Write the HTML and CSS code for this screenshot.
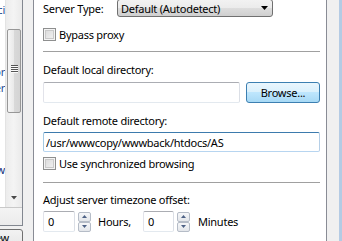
FILE: index.html
```html
<!doctype html>
<html>
  <head>
    <meta charset="UTF-8" />
    <title>Site Manager</title>
    <link rel="stylesheet" href="styles.css">
  </head>
  <body>
    <div class="window">
      <div class="sidebar">
        <div class="tree">
          <div class="tree-top">
            <ul class="tree-list">
              <li class="node node-1"><span>Lucci</span></li>
              <li class="node node-2"><span>Mirror</span></li>
              <li class="node node-3"><span>Server</span></li>
              <li class="node node-4"><span>Preview</span></li>
            </ul>
            <div class="vscroll">
              <div class="thumb"><span class="grip"></span></div>
              <div class="scroll-arrow">
                <svg width="6" height="4" viewBox="0 0 6 4"><polygon points="0,0 6,0 3,3.5" fill="#4a4a4a"/></svg>
              </div>
            </div>
          </div>
          <div class="hscroll"></div>
        </div>
        <button class="side-btn">New folder</button>
      </div>

      <div class="page">
        <div class="row row-type">
          <span class="field-label">Server Type:</span>
          <div class="combo">
            <span class="combo-text">Default (Autodetect)</span>
            <svg width="7" height="4" viewBox="0 0 7 4"><polygon points="0,0 7,0 3.5,4" fill="#000"/></svg>
          </div>
        </div>

        <label class="check check-bypass"><span class="box"></span>Bypass proxy</label>

        <hr class="sep sep-1">

        <div class="caption caption-local">Default local directory:</div>
        <div class="row row-local">
          <input class="textbox local" type="text" value="">
          <button class="btn">Browse...</button>
        </div>

        <div class="caption caption-remote">Default remote directory:</div>
        <input class="textbox remote" type="text" value="/usr/wwwcopy/wwwback/htdocs/AS">

        <label class="check check-sync"><span class="box"></span>Use synchronized browsing</label>

        <hr class="sep sep-2">

        <div class="caption caption-tz">Adjust server timezone offset:</div>
        <div class="row row-tz">
          <input class="textbox num" type="text" value="0">
          <div class="spin">
            <span class="spin-up"><svg width="5" height="3" viewBox="0 0 5 3"><polygon points="2.5,0 5,3 0,3" fill="#4d6185"/></svg></span>
            <span class="spin-down"><svg width="5" height="3" viewBox="0 0 5 3"><polygon points="0,0 5,0 2.5,3" fill="#4d6185"/></svg></span>
          </div>
          <span class="unit unit-hours">Hours,</span>
          <input class="textbox num num-min" type="text" value="0">
          <div class="spin">
            <span class="spin-up"><svg width="5" height="3" viewBox="0 0 5 3"><polygon points="2.5,0 5,3 0,3" fill="#4d6185"/></svg></span>
            <span class="spin-down"><svg width="5" height="3" viewBox="0 0 5 3"><polygon points="0,0 5,0 2.5,3" fill="#4d6185"/></svg></span>
          </div>
          <span class="unit unit-min">Minutes</span>
        </div>
      </div>

      <div class="edge"></div>
    </div>
  </body>
</html>
```

FILE: styles.css
```css
body {
  margin: 0;
  font-family: "Noto Sans", "Open Sans", sans-serif;
  font-size: 11px;
  letter-spacing: -0.25px;
  color: #000;
  background: #f0f0f0;
  overflow: hidden;
}
.window {
  display: flex;
  width: 342px;
  height: 241px;
  overflow: hidden;
}

/* left tree */
.sidebar {
  width: 23px;
  flex: none;
  display: flex;
  flex-direction: column;
}
.tree {
  height: 226px;
  box-sizing: border-box;
  background: #fff;
  border-right: 1px solid #828790;
  border-bottom: 1px solid #828790;
  display: flex;
  flex-direction: column;
}
.tree-top {
  display: flex;
  height: 207px;
}
.tree-list {
  width: 5px;
  margin: 0;
  padding: 0;
  list-style: none;
  overflow: hidden;
  color: #1f4c95;
}
.node {
  display: flex;
  justify-content: flex-end;
  white-space: nowrap;
  line-height: 16px;
  height: 16px;
}
.node-1 { margin-top: 2px; }
.node-2 { margin-top: 46px; }
.node-3 { margin-top: 0; }
.node-4 { margin-top: 66px; color: #12307a; }
.vscroll {
  width: 17px;
  display: flex;
  flex-direction: column;
  justify-content: space-between;
  background: linear-gradient(to right, #dadada 0, #ececec 1px, #f4f4f4 50%, #eaeaea 100%);
}
.thumb {
  margin: 29px 1px 0 2px;
  height: 84px;
  box-sizing: border-box;
  border: 1px solid #979797;
  border-radius: 2px;
  background: linear-gradient(to right, #f6f6f6, #e9e9e9 50%, #d9d9d9 50%, #d4d4d4);
  display: flex;
  justify-content: center;
}
.grip {
  margin-top: 35px;
  width: 7px;
  height: 8px;
  background: repeating-linear-gradient(to bottom, #555 0 1px, #fafafa 1px 2px);
}
.scroll-arrow {
  height: 17px;
  margin-bottom: 1px;
  display: flex;
  align-items: center;
  justify-content: center;
}
.hscroll {
  height: 17px;
  border-top: 1px solid #c9c9c9;
  background: linear-gradient(#f4f4f4, #ebebeb);
}
.side-btn {
  margin: 3px 0 0 -40px;
  width: 63px;
  height: 24px;
  flex: none;
  border: 1px solid #707070;
  border-radius: 3px;
  background: linear-gradient(#f2f2f2, #ebebeb 50%, #dddddd 50%, #cfcfcf);
  font-family: inherit;
  font-size: 11px;
  letter-spacing: -0.25px;
  text-align: right;
  padding: 0 13px 0 0;
  color: #000;
}

/* property page */
.page {
  margin-left: 10px;
  width: 294px;
  flex: none;
  box-sizing: border-box;
  background: #fff;
  border-left: 1px solid #898c95;
  border-right: 1px solid #898c95;
  padding: 0 6px 0 9px;
  display: flex;
  flex-direction: column;
}
.edge {
  width: 15px;
  flex: none;
  box-sizing: border-box;
  border-right: 3px solid #b4cbe4;
}
.row {
  display: flex;
  align-items: center;
}
.row-type {
  margin-top: -1px;
  height: 18px;
}
.field-label {
  width: 74px;
}
.combo {
  width: 156px;
  height: 18px;
  box-sizing: border-box;
  border: 1px solid #707070;
  border-radius: 3px;
  background: linear-gradient(#f2f2f2, #ebebeb 50%, #dddddd 50%, #cfcfcf);
  display: flex;
  align-items: center;
  justify-content: space-between;
  padding: 0 4px 0 3px;
}
.check {
  display: flex;
  align-items: center;
  height: 13px;
}
.box {
  width: 13px;
  height: 13px;
  box-sizing: border-box;
  border: 1px solid #8e8f8f;
  background: linear-gradient(135deg, #d8d8d8, #f4f4f4);
  box-shadow: inset 0 0 0 1px #f4f4f4, inset 0 0 0 2px #c9c9c9;
  margin-right: 3px;
}
.check-bypass { margin-top: 11px; }
.check-sync { margin-top: 5px; }
.sep {
  border: 0;
  height: 1px;
  background: #a0a0a0;
  margin: 0;
}
.sep-1 { margin-top: 10px; }
.sep-2 { margin-top: 12px; }
.caption {
  line-height: 16px;
  height: 16px;
}
.caption-local { margin-top: 10px; }
.caption-remote { margin-top: 10px; }
.caption-tz { margin-top: 9px; }
.textbox {
  box-sizing: border-box;
  margin: 0;
  border: 1px solid;
  border-color: #abadb3 #dbdfe6 #e3e9ef #e2e3ea;
  border-radius: 2px;
  background: #fff;
  font-family: inherit;
  font-size: 11px;
  letter-spacing: -0.25px;
  color: #000;
  padding: 0 2px;
  outline: none;
}
.row-local {
  margin-top: 4px;
  justify-content: space-between;
}
.local {
  width: 197px;
  height: 21px;
}
.btn {
  width: 74px;
  height: 21px;
  border: 1px solid #3c7fb1;
  border-radius: 3px;
  background: linear-gradient(#eaf6fd, #d9f0fc 50%, #bee6fd 50%, #a7d9f5);
  font-family: inherit;
  font-size: 11px;
  letter-spacing: -0.25px;
  color: #000;
  padding: 0;
}
.remote {
  margin-top: 3px;
  width: 277px;
  height: 20px;
  border-color: #3d7bad #b5cfe7 #b7d5f0 #a4c9e3;
}
.row-tz {
  margin-top: 3px;
  height: 21px;
}
.num {
  width: 32px;
  height: 21px;
  padding-left: 4px;
}
.num-min {
  width: 31px;
}
.spin {
  margin-left: 3px;
  width: 13px;
  height: 20px;
  display: flex;
  flex-direction: column;
}
.spin span {
  flex: 1;
  box-sizing: border-box;
  border: 1px solid #b5bcc7;
  border-radius: 2px;
  background: linear-gradient(#f6f7f9, #e3e6ea);
  display: flex;
  align-items: center;
  justify-content: center;
}
.unit-hours {
  margin-left: 7px;
  width: 45px;
}
.unit-min {
  margin-left: 8px;
}
```
